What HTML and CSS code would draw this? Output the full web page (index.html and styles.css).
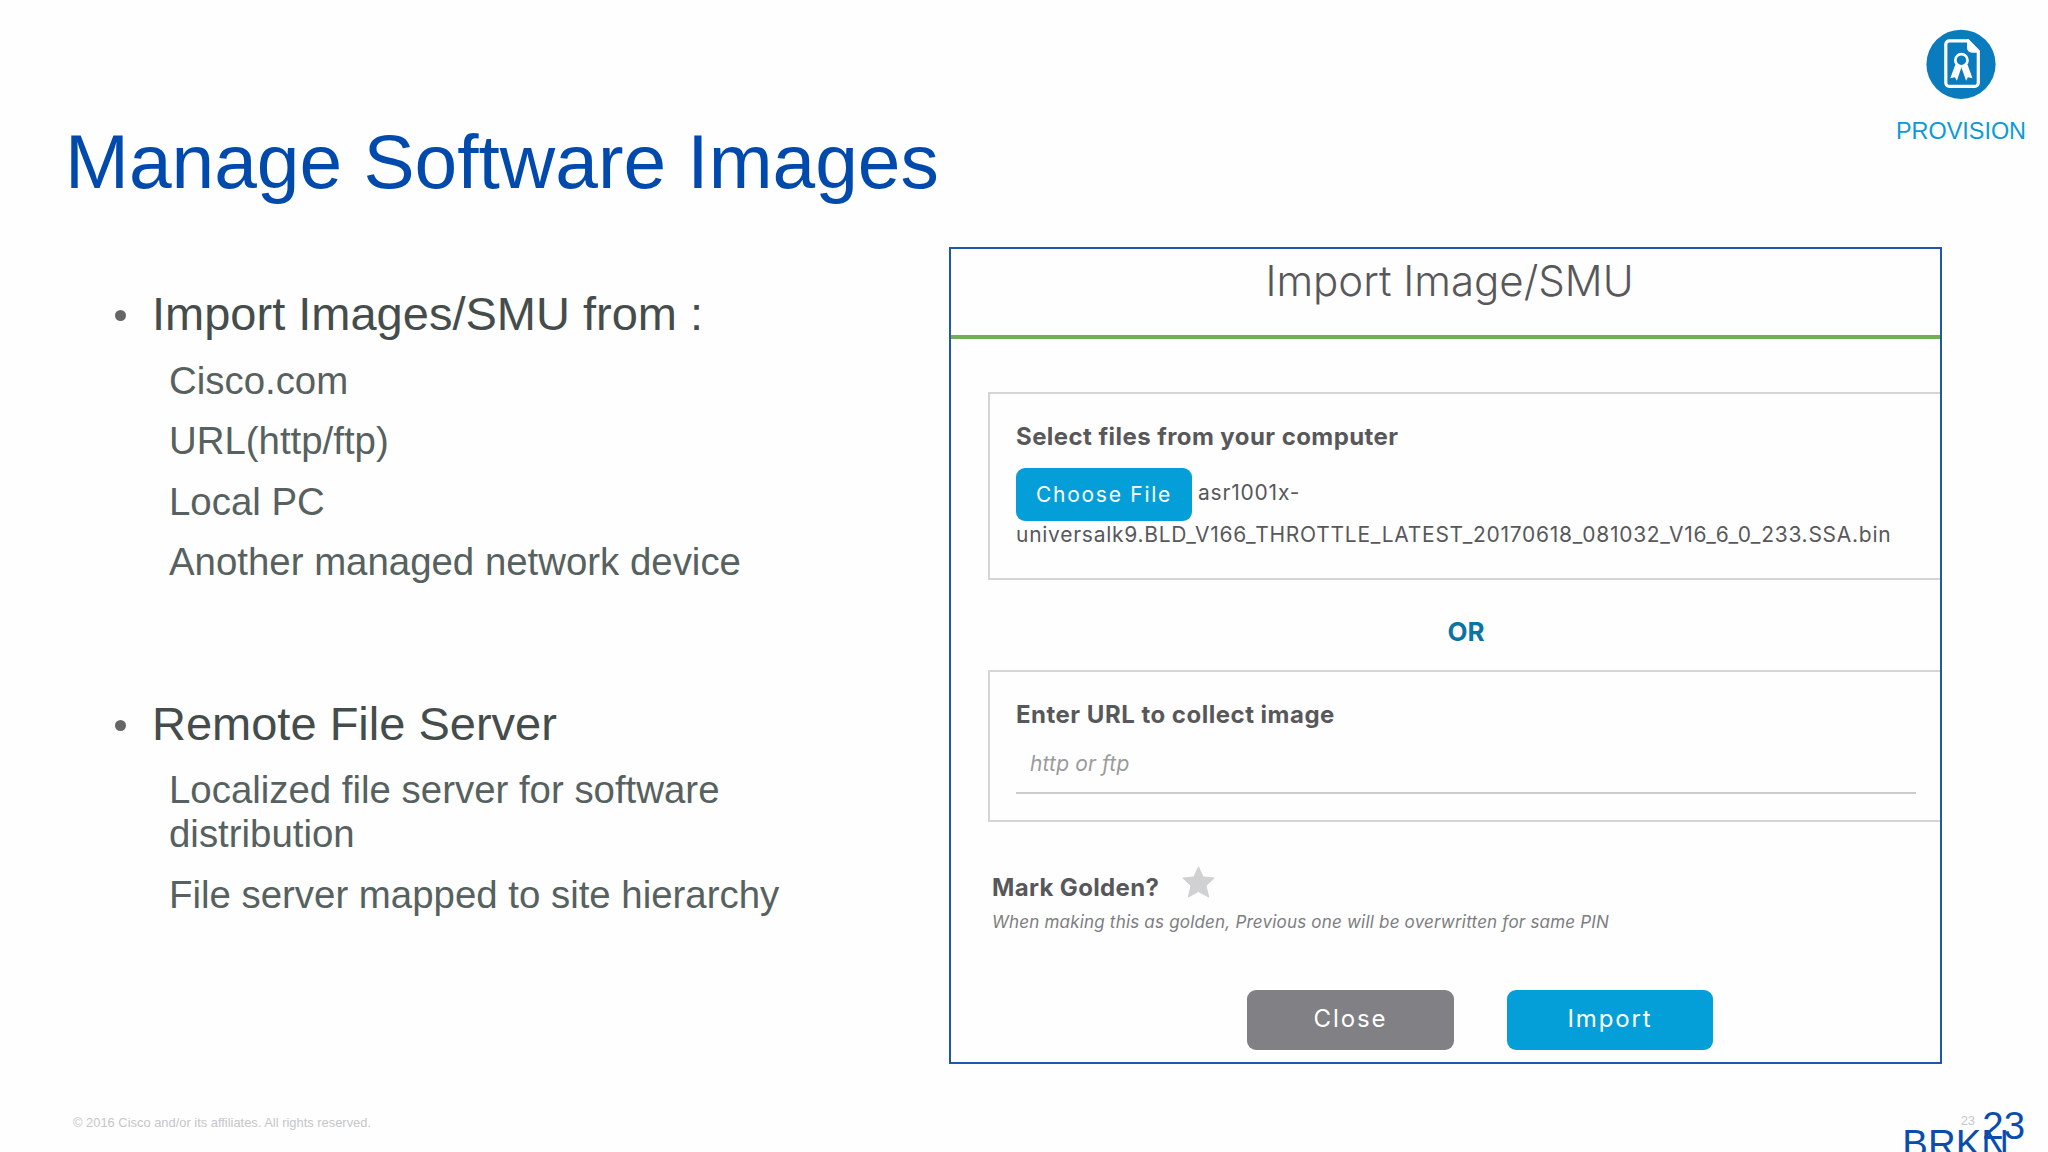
FILE: index.html
```html
<!DOCTYPE html>
<html lang="en">
<head>
    <meta charset="UTF-8">
    <meta name="viewport" content="width=device-width, initial-scale=1.0">
    <title>Manage Software Images</title>
    <link rel="stylesheet" href="styles.css">
</head>
<body>
    <div class="slide">
        <header class="header">
            <h1>Manage Software Images</h1>
            <div class="provision">
                <svg width="70" height="70" viewBox="0 0 70 70">
                    <circle cx="35" cy="35.3" r="34.6" fill="#0a7bbd"/>
                    <path d="M42 11.8H23.3a3.5 3.5 0 0 0-3.5 3.5v38.5a3.5 3.5 0 0 0 3.5 3.5h25.5a3.5 3.5 0 0 0 3.5-3.5V22.5z" fill="none" stroke="#fff" stroke-width="3.2"/>
                    <path d="M41 10.3h1.5L53.8 22v1.7H46a5 5 0 0 1-5-5z" fill="#fff"/>
                    <circle cx="35.4" cy="31.2" r="6.1" fill="none" stroke="#fff" stroke-width="2.7"/>
                    <path d="M29.3 35.5l6 3.3-4.4 12.9-2-3.4-4.6 1zM41.5 35.5l-6 3.3 4.6 12.9 1.8-3.4 4.6 1z" fill="#fff"/>
                </svg>
                <span>PROVISION</span>
            </div>
        </header>

        <main class="content">
            <ul class="topics">
                <li>
                    <h2>Import Images/SMU from :</h2>
                    <p>Cisco.com</p>
                    <p>URL(http/ftp)</p>
                    <p>Local PC</p>
                    <p>Another managed network device</p>
                </li>
                <li>
                    <h2>Remote File Server</h2>
                    <p>Localized file server for software distribution</p>
                    <p>File server mapped to site hierarchy</p>
                </li>
            </ul>

            <section class="dialog">
                <h3 class="dialog-title">Import Image/SMU</h3>
                <div class="panel file-panel">
                    <h4>Select files from your computer</h4>
                    <div class="file-row">
                        <button class="btn choose">Choose File</button>
                        <span>asr1001x-</span>
                    </div>
                    <div class="file-rest">universalk9.BLD_V166_THROTTLE_LATEST_20170618_081032_V16_6_0_233.SSA.bin</div>
                </div>
                <div class="or">OR</div>
                <div class="panel url-panel">
                    <h4>Enter URL to collect image</h4>
                    <div class="url-input">http or ftp</div>
                </div>
                <div class="golden">
                    <h4>Mark Golden?</h4>
                    <svg width="33" height="32" viewBox="0 0 33 32">
                        <path d="M16.5 0.8l4.6 10.1 11.1 1.2-8.2 7.6 2.7 11.4-10.2-5.6-10.2 5.6L9 19.7 0.8 12.1l11.1-1.2z" fill="#d0d1d3" stroke="#d0d1d3" stroke-linejoin="round"/>
                    </svg>
                </div>
                <p class="note">When making this as golden, Previous one will be overwritten for same PIN</p>
                <div class="actions">
                    <button class="btn close">Close</button>
                    <button class="btn import">Import</button>
                </div>
            </section>
        </main>

        <footer class="footer">
            <span class="copyright">© 2016 Cisco and/or its affiliates. All rights reserved.</span>
            <span class="page-small">23</span>
            <span class="session">BRKN</span>
            <span class="page">23</span>
        </footer>
    </div>
</body>
</html>
```
FILE: styles.css
```css
* {
    box-sizing: border-box;
}

body {
    margin: 0;
    font-family: "Liberation Sans", Arial, sans-serif;
    background: #fefefe;
}

h1, h2, h3, h4, p, ul {
    margin: 0;
    padding: 0;
    font-weight: normal;
}

.slide {
    display: flex;
    flex-direction: column;
    width: 2048px;
    height: 1152px;
    overflow: hidden;
}

.header {
    display: flex;
    justify-content: space-between;
    height: 247px;
    padding: 29px 22px 0 65px;
}

.header h1 {
    margin-top: 88px;
    font-size: 76.7px;
    line-height: 90px;
    color: #0049ad;
}

.provision {
    display: flex;
    flex-direction: column;
    align-items: center;
    gap: 18px;
    font-size: 23.4px;
    line-height: 28px;
    color: #0a9bd7;
}

.content {
    display: flex;
    height: 817px;
}

.topics {
    width: 949px;
    padding: 39px 120px 0 115px;
    list-style: none;
}

.topics li + li {
    margin-top: 111.5px;
}

.topics h2 {
    display: flex;
    align-items: center;
    font-size: 47px;
    line-height: 56px;
    color: #454d4c;
}

.topics h2::before {
    content: "";
    width: 11px;
    height: 11px;
    margin: 3px 26px 0 0;
    border-radius: 50%;
    background: #666;
}

.topics p {
    margin: 16.6px 0 0 54px;
    font-size: 38.4px;
    line-height: 44px;
    color: #566160;
}

.dialog {
    width: 993px;
    border: 2px solid #1e58a8;
    font-family: Inter, "Open Sans", sans-serif;
    color: #58585b;
}

.dialog-title {
    height: 90px;
    padding: 6px 0 0 8px;
    border-bottom: 4px solid #72ae53;
    font-size: 42px;
    font-weight: 300;
    line-height: 52px;
    text-align: center;
}

.dialog h4 {
    font-size: 24px;
    font-weight: 700;
    line-height: 30px;
    letter-spacing: 0.43px;
}

.panel {
    margin-left: 37px;
    padding: 28px 24px 0 26px;
    border: 2px solid #d4d5d6;
    border-right: none;
}

.file-panel {
    height: 188px;
    margin-top: 53px;
}

.btn {
    border: none;
    border-radius: 9px;
    background: #049fd9;
    color: #fff;
    font-family: inherit;
    font-size: 24px;
    letter-spacing: 1.9px;
}

.file-row {
    display: flex;
    gap: 6px;
    margin-top: 16px;
    font-size: 21px;
    line-height: 50px;
    letter-spacing: 0.8px;
}

.choose {
    width: 176px;
    height: 53px;
    font-size: 21px;
    letter-spacing: 1.75px;
}

.file-rest {
    margin-top: -1px;
    font-size: 21px;
    line-height: 30px;
    letter-spacing: 0.73px;
    white-space: nowrap;
}

.or {
    margin-top: 36px;
    padding-left: 41px;
    font-size: 26px;
    font-weight: 700;
    line-height: 32px;
    text-align: center;
    color: #0c74a2;
}

.url-panel {
    height: 152px;
    margin-top: 22px;
}

.url-panel h4 {
    letter-spacing: 0.5px;
}

.url-input {
    height: 47px;
    margin-top: 17px;
    padding-left: 14px;
    border-bottom: 2px solid #cbcccd;
    font-size: 21px;
    font-style: italic;
    line-height: 34px;
    letter-spacing: 0.15px;
    color: #9b9b9d;
}

.golden {
    display: flex;
    gap: 23px;
    margin: 44px 0 0 41px;
}

.golden h4 {
    margin-top: 7px;
    letter-spacing: 0.35px;
}

.note {
    margin: 7px 0 0 41px;
    font-size: 17px;
    font-style: italic;
    line-height: 24px;
    letter-spacing: 0.2px;
    color: #7d7d80;
}

.actions {
    display: flex;
    gap: 53px;
    margin: 56px 0 0 296px;
}

.actions .btn {
    width: 207px;
    height: 60px;
    padding-bottom: 4px;
}

.actions .close {
    background: #808085;
}

.actions .import {
    width: 206px;
}

.footer {
    position: relative;
    flex: 1;
    padding: 51px 0 0 73px;
    font-size: 12.9px;
    line-height: 16px;
    color: #c5c6c8;
}

/* the page number overprints the session code at the corner */
.page-small,
.session,
.page {
    position: absolute;
}

.page-small {
    right: 73px;
    top: 49px;
}

.session,
.page {
    font-size: 38.4px;
    line-height: 44px;
    color: #0b4dab;
}

.session {
    right: 39px;
    top: 58px;
}

.page {
    right: 23px;
    top: 40px;
}
```
